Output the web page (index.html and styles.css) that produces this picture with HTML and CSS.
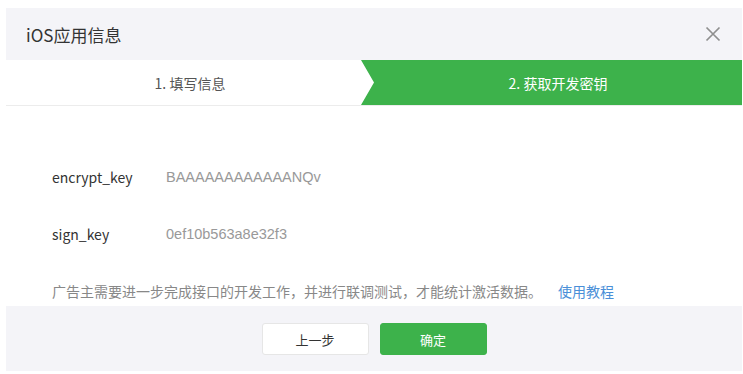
FILE: index.html
```html
<!DOCTYPE html>
<html lang="zh-CN">
<head>
<meta charset="utf-8">
<title>iOS应用信息</title>
<link rel="stylesheet" href="styles.css">
</head>
<body>
<div class="dialog">
  <div class="header">
    <span class="title">iOS应用信息</span>
    <span class="close" aria-label="关闭">
      <svg width="16" height="16" viewBox="0 0 16 16"><path d="M1.5 1.5L14.5 14.5M14.5 1.5L1.5 14.5" stroke="#8f8f8f" stroke-width="1.7" fill="none"/></svg>
    </span>
  </div>
  <div class="steps">
    <div class="step">1. 填写信息</div>
    <div class="step active">2. 获取开发密钥</div>
  </div>
  <div class="content">
    <div class="row"><span class="label">encrypt_key</span><span class="value">BAAAAAAAAAAAANQv</span></div>
    <div class="row"><span class="label">sign_key</span><span class="value">0ef10b563a8e32f3</span></div>
    <p class="hint">广告主需要进一步完成接口的开发工作，并进行联调测试，才能统计激活数据。<a class="link" href="#">使用教程</a></p>
  </div>
  <div class="footer">
    <button class="btn btn-default">上一步</button>
    <button class="btn btn-primary">确定</button>
  </div>
</div>
</body>
</html>
```
FILE: styles.css
```css
* { box-sizing: border-box; }
body {
  margin: 0;
  background: #fff;
  font-family: "Noto Sans CJK SC", "Open Sans", sans-serif;
}
.dialog {
  margin: 8px 1px 0 6px;
  width: 736px;
  background: #fff;
}
.header {
  height: 52px;
  background: #f4f4f8;
  display: flex;
  align-items: center;
  justify-content: space-between;
  padding: 0 21px 0 20px;
}
.title {
  font-size: 17px;
  color: #333;
}
.close { display: flex; }
.steps {
  display: grid;
  grid-template-columns: 1fr 1fr;
  height: 46px;
  border-bottom: 1px solid #ececec;
}
.step {
  display: flex;
  align-items: center;
  justify-content: center;
  font-size: 14px;
  color: #555;
  background: #fff;
}
.step.active {
  background: #3db24b;
  color: #fff;
  margin-left: -13px;
  padding-left: 13px;
  clip-path: polygon(0 0, 100% 0, 100% 100%, 0 100%, 13px 50%);
}
.content {
  height: 200px;
  padding: 60px 0 0 46px;
}
.row {
  display: flex;
  line-height: 22px;
  margin-bottom: 35px;
  font-size: 14px;
}
.label {
  width: 114px;
  color: #333;
}
.value {
  color: #999;
  font-family: "Liberation Sans", "Noto Sans CJK SC", sans-serif;
  font-size: 14.5px;
}
.hint {
  margin: 0;
  line-height: 22px;
  font-size: 14px;
  color: #888;
}
.link {
  color: #4a8fd8;
  text-decoration: none;
  margin-left: 16px;
}
.footer {
  height: 65px;
  background: #f4f4f8;
  display: flex;
  justify-content: center;
  align-items: flex-start;
  gap: 11px;
  padding-top: 17px;
}
.btn {
  width: 107px;
  height: 32px;
  border-radius: 3px;
  font-family: inherit;
  font-size: 13px;
  cursor: pointer;
}
.btn-default {
  background: #fff;
  border: 1px solid #e6e6e6;
  color: #333;
}
.btn-primary {
  background: #3db24b;
  border: 1px solid #3db24b;
  color: #fff;
}
```
